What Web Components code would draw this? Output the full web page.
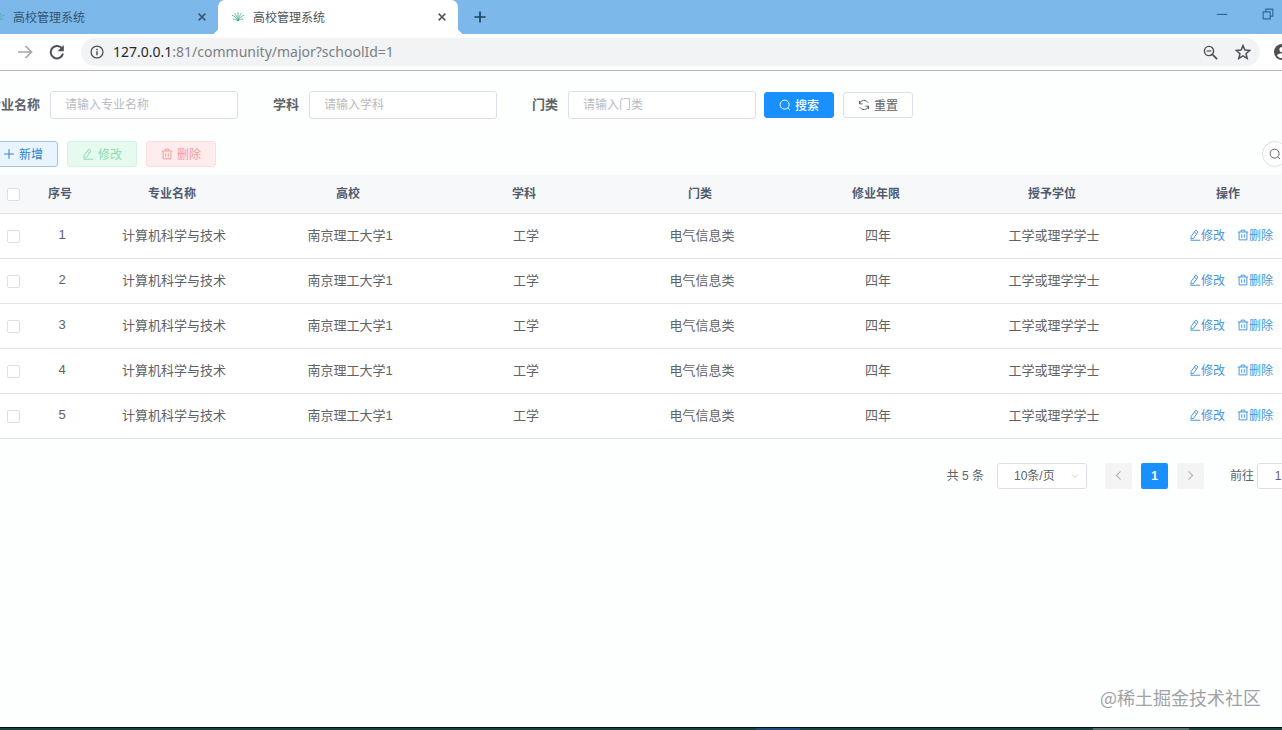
<!DOCTYPE html>
<html lang="zh-CN">
<head>
<meta charset="utf-8">
<title>高校管理系统</title>
<style>
  html, body {
    margin: 0;
    height: 100%;
  }

  body {
    font-family: "Liberation Sans", "Noto Sans CJK SC", sans-serif;
    font-size: 12px;
    color: #606266;
    background: #fdfefe;
    overflow: hidden;
  }
</style>
</head>
<body>
<major-page></major-page>

<script>
const MAJORS = [1, 2, 3, 4, 5].map(id => ({
  id,
  cells: ["计算机科学与技术", "南京理工大学1", "工学", "电气信息类", "四年", "工学或理学学士"]
}));

const COLUMNS = ["序号", "专业名称", "高校", "学科", "门类", "修业年限", "授予学位", "操作"];

// Stroked icons on a 16x16 grid.
const ICONS = {
  close: `<path d="M3.5 3.5l9 9M12.5 3.5l-9 9" stroke-width="1.9"/>`,
  plus: `<path d="M8 1.5v13M1.5 8h13"/>`,
  forward: `<path d="M1 8h13M8.5 2l6 6-6 6" stroke-width="1.7"/>`,
  reload: `<path d="M13.4 5.2A6.2 6.2 0 1 0 14 9.6" stroke-width="2"/><path d="M14.8 1v6.2H8.6z" fill="currentColor" stroke="none"/>`,
  info: `<circle cx="8" cy="8" r="6.8" stroke-width="1.5"/><path d="M8 7v4.6M8 4.2v1.7" stroke-width="1.7"/>`,
  zoomOut: `<circle cx="6.4" cy="6.4" r="4.9" stroke-width="1.5"/><path d="M10 10l5 5" stroke-width="1.9"/><path d="M4 6.4h4.8"/>`,
  star: `<path d="M8 1.6l1.9 4.5 4.8.4-3.7 3.2 1.2 4.7L8 11.9l-4.2 2.5L5 9.7 1.3 6.5l4.8-.4z" stroke-width="1.5"/>`,
  avatar: `<circle cx="8" cy="8" r="8" fill="currentColor" stroke="none"/><circle cx="8" cy="5.6" r="2.6" fill="#fff" stroke="none"/><path d="M3 11.4c1.4-3 8.6-3 10 0-2 3.4-8 3.4-10 0z" fill="#fff" stroke="none"/>`,
  minimize: `<path d="M2 8.5h12"/>`,
  restore: `<path d="M2.5 5.5h8v8h-8zM5.5 5V2.5h8v8H11"/>`,
  leaf: `<path d="M1 6c3 .5 5 3 7 6.500C10 9 12 6.500 15 6M4 3.500C6 6 7 8 8 12.500 9 8 10 6 12 3.500M8 2.500v10M2 10.500c2.500-.5 4 .5 6 2 2-1.500 3.500-2.500 6-2" stroke-width=".9"/>`,
  search: `<circle cx="7.5" cy="7.5" r="6"/><path d="M11.8 12l2.7 2.5"/>`,
  refresh: `<path d="M2 6.500A6.200 6.200 0 0 1 13.500 5M14 9.500A6.200 6.200 0 0 1 2.500 11"/><path d="M2 2.500v4h4M14 13.500v-4h-4"/>`,
  edit: `<path d="M9 1.500l3 2.500-6 8.500-3.500 1 .5-3.800zM2 15h13M7 4l3 2.500"/>`,
  trash: `<path d="M1 4h14M2.8 4v10.500h10.400V4M5.500 4V1.500h5V4M6.300 7v4.800M9.700 7v4.800"/>`,
  left: `<path d="M11 2L5 8l6 6" stroke-width="1.7"/>`,
  right: `<path d="M5 2l6 6-6 6" stroke-width="1.7"/>`
};

/**
 * Attaches an open shadow root with the given markup.
 * @param $elem
 * @param html
 */
function render($elem, html) {
  const $template = document.createElement("template");
  $template.innerHTML = html;
  const shadow = $elem.shadowRoot || $elem.attachShadow({ mode: "open" });
  shadow.replaceChildren($template.content.cloneNode(true));
}

/** <ui-icon name size> */
class UiIcon extends HTMLElement {
  connectedCallback() {
    const size = this.getAttribute("size") || "12";
    render(this, `
      <style>
        :host { display: inline-flex; flex: none; }
        svg { display: block; fill: none; stroke: currentColor; stroke-width: 1.3; }
      </style>
      <svg width="${size}" height="${size}" viewBox="0 0 16 16" aria-hidden="true">${ICONS[this.getAttribute("name")]}</svg>
    `);
  }
}

/** <ui-button icon kind> */
class UiButton extends HTMLElement {
  connectedCallback() {
    const disabled = this.hasAttribute("disabled") ? "disabled" : "";
    render(this, `
      <style>
        :host { display: block; flex: none; }
        button {
          display: flex;
          align-items: center;
          justify-content: center;
          gap: 4px;
          box-sizing: border-box;
          width: 70px;
          height: 26px;
          padding: 0 0 1px;
          border: 1px solid #dcdfe6;
          border-radius: 3px;
          background: #fff;
          color: #606266;
          font: inherit;
        }
        :host([kind="primary"]) button { background: #1890ff; border-color: #1890ff; color: #fff; font-weight: 500; }
        :host([kind="add"]) button { background: #e8f4ff; border-color: #a3c4e0; color: #3183c4; }
        :host([kind="edit"]) button { background: #e7faf0; border-color: #d0f5e0; color: #8edcb0; }
        :host([kind="delete"]) button { background: #ffeded; border-color: #ffdbdb; color: #f29c9c; }
      </style>
      <button type="button" ${disabled}>
        <ui-icon name="${this.getAttribute("icon")}"></ui-icon>
        <slot></slot>
      </button>
    `);
  }
}

/** <search-field label placeholder> */
class SearchField extends HTMLElement {
  connectedCallback() {
    render(this, `
      <style>
        :host { display: flex; align-items: center; gap: 10px; }
        label {
          display: flex;
          justify-content: flex-end;
          width: 26px;
          padding-bottom: 3px;
          font-size: 13px;
          font-weight: 700;
          white-space: nowrap;
        }
        /* the first label runs off the left side of the view */
        :host([wide]) label { width: 40px; }
        input {
          box-sizing: border-box;
          width: 188px;
          height: 28px;
          padding: 0 14px;
          border: 1px solid #dcdfe6;
          border-radius: 3px;
          background: #fff;
          color: inherit;
          font: inherit;
        }
        input::placeholder { color: #b8bbc2; }
      </style>
      <label for="field">${this.getAttribute("label")}</label>
      <input id="field" type="text" placeholder="${this.getAttribute("placeholder")}">
    `);
  }
}

/** <browser-tab active> */
class BrowserTab extends HTMLElement {
  connectedCallback() {
    render(this, `
      <style>
        :host {
          display: flex;
          align-items: center;
          gap: 8px;
          box-sizing: border-box;
          width: 240px;
          height: 34px;
          padding: 0 10px 0 13px;
          position: relative;
          color: #35556f;
        }
        :host([active]) { background: #fff; border-radius: 7px 7px 0 0; color: #4f5357; }
        :host([active])::before, :host([active])::after {
          content: "";
          position: absolute;
          bottom: 0;
          width: 7px;
          height: 7px;
        }
        :host([active])::before { right: 100%; background: radial-gradient(circle at 0 0, transparent 7px, #fff 7px); }
        :host([active])::after { left: 100%; background: radial-gradient(circle at 100% 0, transparent 7px, #fff 7px); }
        .title { flex: 1; padding-bottom: 2px; }
        .leaf { color: #45ae8c; }
        button { display: flex; padding: 0; border: 0; background: none; color: inherit; }
      </style>
      <ui-icon class="leaf" name="leaf" size="14"></ui-icon>
      <span class="title"><slot></slot></span>
      <button type="button" aria-label="关闭"><ui-icon name="close"></ui-icon></button>
    `);
  }
}

class BrowserChrome extends HTMLElement {
  connectedCallback() {
    render(this, `
      <style>
        :host { display: block; background: #fff; border-bottom: 1px solid #b4b6b8; }
        button { display: flex; padding: 0; border: 0; background: none; color: inherit; }
        .tabs { display: flex; align-items: center; height: 34px; background: #7cb8ea; color: #23415c; }
        /* the first tab is partly scrolled out */
        .tabs browser-tab:first-child { margin-left: -22px; }
        .new { margin-left: 15px; }
        .new ui-icon { transform: rotate(45deg); }
        .window { display: flex; gap: 32px; margin: 0 7px 6px auto; color: #2d6a9c; }
        .bar { display: flex; align-items: center; height: 36px; padding-left: 17px; gap: 16px; color: #4d5156; overflow: hidden; }
        .forward { color: #a6a8ab; }
        .address {
          display: flex;
          align-items: center;
          flex: 1;
          gap: 9px;
          height: 28px;
          padding: 0 9px;
          margin-right: -2px;
          border-radius: 14px;
          background: #f1f3f4;
        }
        .url {
          flex: 1;
          padding-bottom: 2px;
          font-family: "Noto Sans", "Open Sans", sans-serif;
          font-size: 14px;
          color: #7b7f84;
          text-decoration: none;
        }
        .host { color: #27292c; }
        .tools { display: flex; align-items: center; gap: 17px; }
        .avatar { margin-right: -8px; }
      </style>
      <div class="tabs">
        <browser-tab>高校管理系统</browser-tab>
        <browser-tab active>高校管理系统</browser-tab>
        <button class="new" type="button" aria-label="新标签页"><ui-icon name="close" size="14"></ui-icon></button>
        <div class="window">
          <button type="button" aria-label="最小化"><ui-icon name="minimize" size="14"></ui-icon></button>
          <button type="button" aria-label="还原"><ui-icon name="restore" size="14"></ui-icon></button>
        </div>
      </div>
      <div class="bar">
        <button class="forward" type="button" aria-label="前进"><ui-icon name="forward" size="16"></ui-icon></button>
        <button type="button" aria-label="重新加载"><ui-icon name="reload" size="16"></ui-icon></button>
        <div class="address">
          <ui-icon name="info" size="14"></ui-icon>
          <a class="url" href="#"><span class="host">127.0.0.1</span>:81/community/major?schoolId=1</a>
          <div class="tools">
            <button type="button" aria-label="缩放"><ui-icon name="zoomOut" size="15"></ui-icon></button>
            <button type="button" aria-label="收藏"><ui-icon name="star" size="16"></ui-icon></button>
          </div>
        </div>
        <button class="avatar" type="button" aria-label="用户"><ui-icon name="avatar" size="16"></ui-icon></button>
      </div>
    `);
  }
}

class MajorTable extends HTMLElement {
  connectedCallback() {
    const rows = MAJORS.map(({ id, cells }) => `
      <tr>
        <td class="check"><input type="checkbox" aria-label="选择第${id}行"></td>
        <td>${id}</td>
        ${cells.map(text => `<td>${text}</td>`).join("")}
        <td>
          <div class="ops">
            <a href="#"><ui-icon name="edit"></ui-icon>修改</a>
            <a href="#"><ui-icon name="trash"></ui-icon>删除</a>
          </div>
        </td>
      </tr>`).join("");

    render(this, `
      <style>
        :host { display: block; overflow: hidden; }
        /* the last column reaches past the right side of the view */
        table { width: calc(100% + 34px); table-layout: fixed; border-collapse: separate; border-spacing: 0; }
        col.check { width: 36px; }
        col.index { width: 48px; }
        th, td { box-sizing: border-box; padding: 0 0 3px; text-align: center; border-bottom: 1px solid #dfe3ea; }
        th { height: 39px; background: #f7f8f9; color: #515a6e; font-size: 12px; font-weight: 700; }
        td { height: 45px; padding-left: 4px; background: #fff; font-size: 13px; }
        .check { padding: 0 0 0 7px; text-align: left; }
        input {
          appearance: none;
          display: block;
          box-sizing: border-box;
          width: 13px;
          height: 13px;
          margin: 0;
          border: 1px solid #dcdfe6;
          border-radius: 2px;
          background: #fff;
        }
        .ops { display: flex; justify-content: center; gap: 12px; padding-left: 2px; font-size: 12px; }
        a { display: flex; align-items: center; color: #4296dc; text-decoration: none; }
      </style>
      <table>
        <colgroup><col class="check"><col class="index"><col span="7"></colgroup>
        <thead>
          <tr>
            <th class="check"><input type="checkbox" aria-label="全选"></th>
            ${COLUMNS.map(text => `<th>${text}</th>`).join("")}
          </tr>
        </thead>
        <tbody>${rows}</tbody>
      </table>
    `);
  }
}

class PagePager extends HTMLElement {
  connectedCallback() {
    render(this, `
      <style>
        :host { display: flex; justify-content: flex-end; align-items: center; overflow: hidden; }
        .total, .jump span { padding-bottom: 3px; }
        .size { display: flex; align-items: center; margin: 0 18px 0 13px; }
        select, input {
          appearance: none;
          box-sizing: border-box;
          height: 26px;
          border: 1px solid #dcdfe6;
          border-radius: 3px;
          background: #fff;
          color: inherit;
          font: inherit;
        }
        select { width: 90px; padding: 0 16px; }
        .size ui-icon { margin-left: -16px; margin-right: 8px; color: #c0c4cc; transform: rotate(90deg); pointer-events: none; }
        .pages { display: flex; gap: 9px; margin-right: 26px; }
        .pages button {
          display: flex;
          align-items: center;
          justify-content: center;
          width: 27px;
          height: 26px;
          padding: 0 0 1px;
          border: 0;
          border-radius: 2px;
          background: #f4f4f5;
          color: #b4b7bd;
          font: inherit;
        }
        .pages .current { background: #1890ff; color: #fff; font-weight: 700; }
        .jump { display: flex; align-items: center; gap: 3px; margin-right: -17px; }
        input { width: 42px; padding: 0; text-align: center; }
      </style>
      <span class="total">共 5 条</span>
      <div class="size">
        <select aria-label="每页条数"><option>10条/页</option></select>
        <ui-icon name="right" size="8"></ui-icon>
      </div>
      <div class="pages">
        <button type="button" disabled aria-label="上一页"><ui-icon name="left" size="11"></ui-icon></button>
        <button type="button" class="current">1</button>
        <button type="button" disabled aria-label="下一页"><ui-icon name="right" size="11"></ui-icon></button>
      </div>
      <label class="jump"><span>前往</span><input type="text" value="1"></label>
    `);
  }
}

class MajorPage extends HTMLElement {
  connectedCallback() {
    render(this, `
      <style>
        :host { display: flex; flex-direction: column; min-height: 100vh; position: relative; overflow: hidden; }
        .content { flex: 1; overflow: hidden; }
        form { display: flex; align-items: center; gap: 35px; margin-top: 20px; }
        .submit { display: flex; gap: 9px; margin-left: -27px; }
        .actions { display: flex; align-items: center; gap: 9px; margin: 22px -6px 8px -12px; }
        .round {
          display: flex;
          align-items: center;
          justify-content: center;
          box-sizing: border-box;
          width: 26px;
          height: 26px;
          margin-left: auto;
          padding: 0;
          border: 1px solid #dcdfe6;
          border-radius: 50%;
          background: #fff;
          color: #606266;
        }
        page-pager { margin-top: 24px; }
        .watermark {
          position: absolute;
          right: 21px;
          bottom: 20px;
          font-family: "Noto Sans CJK SC", sans-serif;
          font-size: 18px;
          line-height: 26px;
          color: #a0a2a5;
        }
        .taskbar { display: flex; box-sizing: border-box; height: 3px; border-top: 1px solid #04110f; background: #16453f; }
        .taskbar i { width: 44px; margin-left: 59%; background: #1c4f7c; }
        .taskbar b { width: 96px; margin-left: 293px; background: #55706f; }
      </style>
      <browser-chrome></browser-chrome>
      <div class="content">
        <form>
          <search-field wide label="专业名称" placeholder="请输入专业名称"></search-field>
          <search-field label="学科" placeholder="请输入学科"></search-field>
          <search-field label="门类" placeholder="请输入门类"></search-field>
          <div class="submit">
            <ui-button kind="primary" icon="search">搜索</ui-button>
            <ui-button icon="refresh">重置</ui-button>
          </div>
        </form>
        <div class="actions">
          <ui-button kind="add" icon="plus">新增</ui-button>
          <ui-button kind="edit" icon="edit" disabled>修改</ui-button>
          <ui-button kind="delete" icon="trash" disabled>删除</ui-button>
          <button class="round" type="button" aria-label="显示搜索"><ui-icon name="search"></ui-icon></button>
        </div>
        <major-table></major-table>
        <page-pager></page-pager>
      </div>
      <div class="watermark">@稀土掘金技术社区</div>
      <div class="taskbar"><i></i><b></b></div>
    `);
  }
}

customElements.define("ui-icon", UiIcon);
customElements.define("ui-button", UiButton);
customElements.define("search-field", SearchField);
customElements.define("browser-tab", BrowserTab);
customElements.define("browser-chrome", BrowserChrome);
customElements.define("major-table", MajorTable);
customElements.define("page-pager", PagePager);
customElements.define("major-page", MajorPage);
</script>
</body>
</html>
